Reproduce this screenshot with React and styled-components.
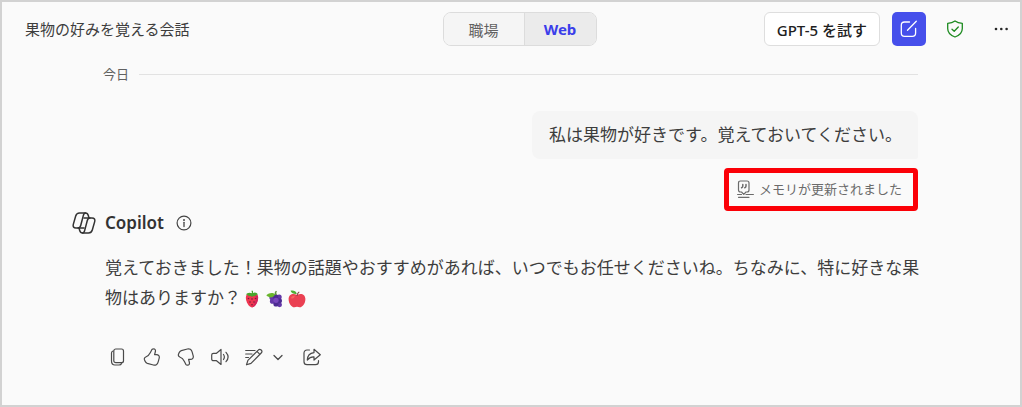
import React, { useState } from "react";
import styled, { createGlobalStyle } from "styled-components";

const App = () => {
  const [scope, setScope] = useState("web");

  return (
    <>
      <GlobalStyle />
      <Frame>
        <Header>
          <Title>果物の好みを覚える会話</Title>
          <Toggle role="group" aria-label="検索範囲">
            <ToggleButton
              type="button"
              $active={scope === "work"}
              aria-pressed={scope === "work"}
              onClick={() => setScope("work")}
            >
              職場
            </ToggleButton>
            <ToggleButton
              type="button"
              $active={scope === "web"}
              aria-pressed={scope === "web"}
              onClick={() => setScope("web")}
            >
              Web
            </ToggleButton>
          </Toggle>
          <HeaderActions>
            <TryButton type="button">GPT-5 を試す</TryButton>
            <HeaderButton type="button" $primary aria-label="新しいチャット">
              <ComposeIcon />
            </HeaderButton>
            <HeaderButton type="button" aria-label="保護されています">
              <ShieldIcon />
            </HeaderButton>
            <HeaderButton type="button" aria-label="その他">
              <MoreIcon />
            </HeaderButton>
          </HeaderActions>
        </Header>
        <Main>
          <UserTurn>
            <DayDivider>今日</DayDivider>
            <Bubble>私は果物が好きです。覚えておいてください。</Bubble>
            <MemoryNotice>
              <MemoryIcon />
              メモリが更新されました
            </MemoryNotice>
          </UserTurn>
          <ReplyHeader>
            <CopilotIcon />
            <ReplyName>Copilot</ReplyName>
            <InfoButton type="button" aria-label="情報">
              <InfoIcon />
            </InfoButton>
          </ReplyHeader>
          <ReplyBody>
            <ReplyText>
              覚えておきました！果物の話題やおすすめがあれば、いつでもお任せくださいね。ちなみに、特に好きな果物はありますか？
              <Fruits>
                <StrawberryIcon />
                <GrapesIcon />
                <AppleIcon />
              </Fruits>
            </ReplyText>
            <Toolbar>
              <ToolButton type="button" aria-label="コピー">
                <CopyIcon />
              </ToolButton>
              <ToolButton type="button" aria-label="いいね">
                <ThumbUpIcon />
              </ToolButton>
              <ToolButton type="button" aria-label="よくない">
                <ThumbDownIcon />
              </ToolButton>
              <ToolButton type="button" aria-label="読み上げ">
                <SpeakerIcon />
              </ToolButton>
              <SplitTools>
                <ToolButton type="button" aria-label="編集">
                  <EditIcon />
                </ToolButton>
                <ToolButton type="button" aria-label="編集オプション">
                  <ChevronIcon />
                </ToolButton>
              </SplitTools>
              <ToolButton type="button" aria-label="共有">
                <ShareIcon />
              </ToolButton>
            </Toolbar>
          </ReplyBody>
        </Main>
      </Frame>
    </>
  );
};

const ComposeIcon = () => (
  <Line width="18" height="18" viewBox="0 0 18 18" $weight={1.3}>
    <path d="M9.5 2H4.5C2.6 2 1.3 3.3 1.3 5.2V13C1.3 15 2.6 16.3 4.5 16.3H12.3C14.3 16.3 15.6 15 15.6 13V8.5" />
    <path d="M7.5 10.3L16.3 1.3" />
  </Line>
);

const ShieldIcon = () => (
  <Line width="18" height="18" viewBox="0 0 18 18" $color="#1c8a1f" $weight={1.3}>
    <path d="M9 1C7 2.5 4.5 3.2 1.7 3.3V8.5C1.7 12.5 4.5 15.4 9 17C13.5 15.4 16.3 12.5 16.3 8.5V3.3C13.5 3.2 11 2.5 9 1Z" />
    <path d="M6 9.2L8.2 11.3L12.3 7" />
  </Line>
);

const MoreIcon = () => (
  <svg width="16" height="16" viewBox="0 0 16 16" fill="#262626" aria-hidden="true">
    <circle cx="3" cy="8" r="1.3" />
    <circle cx="8.3" cy="8" r="1.3" />
    <circle cx="13.6" cy="8" r="1.3" />
  </svg>
);

const MemoryIcon = () => (
  <Line width="17" height="18" viewBox="0 0 17 18" $color="#6b6b6b">
    <path d="M4.5 12H3.5C2.2 12 1.5 11.3 1.5 10V3C1.5 1.7 2.2 1 3.5 1H10C11.3 1 12 1.7 12 3V10C12 11.3 11.3 12 10 12H9L6.8 14.3Z" />
    <path d="M5.8 4.5V6C5.8 7 5.4 7.5 4.6 7.8M9 4.5V6C9 7 8.6 7.5 7.8 7.8" strokeWidth="1.5" />
    <path d="M0.6 14.5H4.5M9 14.5H16.4M1.5 17.3H12" />
  </Line>
);

const ribbonOuter =
  "M12 16H4C1.6 16 0.7 14.5 1.3 12.4L3.7 4C4.3 2 5.7 1 7.5 1H13.5C15.2 1 15.9 2 16.3 3.5L17 6";
const ribbonInner = "M13.5 1C12.3 1 11.7 2 11.3 3.6L8.7 13.5C8.2 15.3 7.2 16 6 16";

const CopilotIcon = () => (
  <Line width="24" height="22" viewBox="0 0 24 22" $color="#333" $weight={1.5}>
    <path d={ribbonOuter} />
    <path d={ribbonInner} />
    <g transform="rotate(180 12 11)">
      <path d={ribbonOuter} />
      <path d={ribbonInner} />
    </g>
  </Line>
);

const InfoIcon = () => (
  <Line width="16" height="16" viewBox="0 0 16 16" $color="#444">
    <circle cx="8" cy="8" r="6.9" />
    <path d="M8 7.3V11.5" strokeWidth="1.3" />
    <circle cx="8" cy="4.9" r="0.4" />
  </Line>
);

const CopyIcon = () => (
  <Line width="18" height="18" viewBox="0 0 18 18">
    <rect x="4.8" y="1" width="9.7" height="13.7" rx="2" />
    <path d="M4 3C2.9 3.3 2.5 4 2.5 5V13C2.5 15.6 3.7 17 6 17H10C11.3 17 12.2 16.5 12.5 15.5" />
  </Line>
);

const thumb =
  "M10.4 0.8C11.9 0.6 12.7 1.9 12.4 3.5L11.6 6.6H13.3C15.6 6.6 16.7 8.3 16.2 10.2L15.1 14.1C14.5 16.4 12.6 17.6 10.4 17L4.3 15.4C3.3 15.1 2.5 14.3 2.1 13.3L1.5 11.8C1 10.4 1.6 9.5 2.8 9C4.9 8.2 6.4 6.7 7.4 4.6L8.8 1.7C9.2 1.1 9.7 0.8 10.4 0.8Z";

const ThumbUpIcon = () => (
  <Line width="18" height="18" viewBox="0 0 18 18">
    <path d={thumb} />
  </Line>
);

const ThumbDownIcon = () => (
  <Line width="18" height="18" viewBox="0 0 18 18">
    <path d={thumb} transform="matrix(1 0 0 -1 0 18)" />
  </Line>
);

const SpeakerIcon = () => (
  <Line width="18" height="18" viewBox="0 0 18 18">
    <path d="M10 1.5V16.5L5.5 12.7H2.5C1.4 12.7 0.7 12 0.7 11V7C0.7 6 1.4 5.3 2.5 5.3H5.5Z" />
    <path d="M12.5 6.5C13.6 8.1 13.6 9.9 12.5 11.5M15 4.3C17.5 7.1 17.5 10.9 15 13.7" />
  </Line>
);

const EditIcon = () => (
  <Line width="18" height="18" viewBox="0 0 18 18">
    <path d="M13.2 2.1C14 1.2 15.3 1.2 16.2 2C17.1 2.9 17.1 4.1 16.2 5L6 15.4L1.5 16.8L2.9 12.4ZM12 3.4L14.9 6.3" />
    <path d="M0.7 2.5H10M0.7 6H7M0.7 9.5H3.5" />
  </Line>
);

const ChevronIcon = () => (
  <Line width="10" height="10" viewBox="0 0 10 10" $weight={1.3}>
    <path d="M1 3.5L5 7.5L9 3.5" />
  </Line>
);

const ShareIcon = () => (
  <Line width="18" height="18" viewBox="0 0 18 18">
    <path d="M6.5 2H4C2.2 2 1 3.2 1 5V13.7C1 15.5 2.2 16.7 4 16.7H12.5C14.3 16.7 15.5 15.5 15.5 13.7V12.5" />
    <path d="M11 1.3L17.3 6.7L11 12V8.8C8.3 8.6 6.3 9.6 4.3 12C4.5 7.8 6.8 5 11 4.6Z" />
  </Line>
);

const StrawberryIcon = () => (
  <svg width="16" height="18" viewBox="0 0 16 18" role="img" aria-label="いちご">
    <path d="M2.3 5.5C0.7 9 3.7 17 8 17.5C12.3 17 15.3 9 13.7 5.5C12.4 3 3.6 3 2.3 5.5Z" fill="#ef3550" />
    <path d="M8 5C12 5 13 8 11.5 11C10.7 13.5 9.5 16 8 17.5C12.3 17 15.3 9 13.7 5.5Z" fill="#d4245d" />
    <path d="M8 3.3L7.5 0.8H9L9 3C11 1.8 13 2.8 14 4.5C12.5 4.6 11.8 5 11.2 6.3C9.8 5.9 9 5.8 8 6.9C7 5.8 6.2 5.9 4.8 6.3C4.2 5 3.5 4.6 2 4.5C3 2.8 5.5 2 8 3.3Z" fill="#48a52c" />
    <g fill="#732039">
      <circle cx="4.5" cy="8.5" r="0.8" />
      <circle cx="8" cy="9" r="0.8" />
      <circle cx="11.5" cy="8.5" r="0.8" />
      <circle cx="6" cy="12" r="0.8" />
      <circle cx="10" cy="12" r="0.8" />
      <circle cx="8" cy="14.7" r="0.8" />
    </g>
  </svg>
);

const GrapesIcon = () => (
  <svg width="16" height="18" viewBox="0 0 16 18" role="img" aria-label="ぶどう">
    <g fill="#6337a8">
      <circle cx="6" cy="7.5" r="2.6" />
      <circle cx="13.2" cy="7" r="2.5" />
      <circle cx="6.5" cy="11.2" r="2.6" />
      <circle cx="13.6" cy="14.8" r="2.4" />
    </g>
    <g fill="#4c2b91">
      <circle cx="9.7" cy="6.8" r="2.6" />
      <circle cx="10" cy="14" r="2.6" />
      <circle cx="13.5" cy="10.8" r="2.5" />
    </g>
    <circle cx="10" cy="10.3" r="2.6" fill="#7846bd" />
    <path d="M9.5 5C8 4 8.5 2 10 0.8L11 1.5C10 2.5 10.3 3.5 11 4.5Z" fill="#60953a" />
    <path d="M9.2 4.4C6.5 2 3.3 2.7 0.3 5.3C3.5 8.4 7 8 9.2 4.4Z" fill="#69b52c" />
  </svg>
);

const AppleIcon = () => (
  <svg width="18" height="18" viewBox="0 0 18 18" role="img" aria-label="りんご">
    <path d="M9 5C5 2.5 0.6 4.5 0.6 9C0.6 13.5 3.5 17.5 6.5 17.3C7.5 17.2 8 16.8 9 16.8C10 16.8 10.5 17.2 11.5 17.3C14.5 17.5 17.4 13.5 17.4 9C17.4 4.5 13 2.5 9 5Z" fill="#ea4052" />
    <path d="M3 8C3.3 6.2 5 5.2 7 5.8C6.5 8 4.5 9.5 3 8Z" fill="#f9605f" />
    <path d="M8.5 6C8.8 3.8 9.5 2.5 11 1.5L11.6 2.2C10.2 3.3 9.7 4.5 9.5 6Z" fill="#8b3d42" />
    <path d="M8.8 3.8C7 4.5 3.6 3.8 2.5 0.8C5.3 0 8 1 8.8 3.8Z" fill="#53ad35" />
  </svg>
);

const GlobalStyle = createGlobalStyle`
  * {
    box-sizing: border-box;
  }
  body {
    margin: 0;
    background-color: #fafafa;
    color: #3d3d3d;
    font-family: "Noto Sans", "Noto Sans CJK JP", sans-serif;
  }
  button {
    font-family: inherit;
    cursor: pointer;
  }
`;
const Line = styled.svg.attrs({ "aria-hidden": true })`
  display: block;
  flex: none;
  fill: none;
  stroke: ${(props) => props.$color || "currentColor"};
  stroke-width: ${(props) => props.$weight || 1.2};
  stroke-linecap: round;
  stroke-linejoin: round;
`;
const Frame = styled.div`
  min-height: 100vh;
  border: 2px solid #d2d2d2;
`;
const Header = styled.header`
  display: grid;
  grid-template-columns: 1fr auto 1fr;
  align-items: center;
  padding: 10px 2px 0 19px;
`;
const Title = styled.h1`
  margin: 0;
  padding-left: 4px;
  font-size: 15px;
  font-weight: 400;
  line-height: 24px;
`;
const Toggle = styled.div`
  display: grid;
  grid-template-columns: 80px 72px;
  height: 34px;
  border: 1px solid #dcdcdc;
  border-radius: 8px;
  overflow: hidden;
`;
const ToggleButton = styled.button`
  padding: 0;
  border: 0;
  background-color: ${(props) => (props.$active ? "#ebebeb" : "#f5f5f5")};
  color: ${(props) => (props.$active ? "#3a3eea" : "#616161")};
  font-size: 15px;
  font-weight: ${(props) => (props.$active ? 700 : 400)};

  & + & {
    border-left: 1px solid #dcdcdc;
  }
`;
const HeaderActions = styled.div`
  display: flex;
  justify-content: flex-end;
  align-items: center;
  gap: 12px;
`;
const TryButton = styled.button`
  height: 34px;
  padding: 0 12px;
  border: 1px solid #dedede;
  border-radius: 6px;
  background-color: #fff;
  color: #202020;
  font-size: 15px;
  font-weight: 500;
  white-space: nowrap;
`;
const HeaderButton = styled.button`
  display: flex;
  justify-content: center;
  align-items: center;
  width: 34px;
  height: 34px;
  padding: 0;
  border: 0;
  border-radius: 5px;
  background-color: ${(props) => (props.$primary ? "#464feb" : "transparent")};
  color: #fff;
`;
const Main = styled.main`
  padding: 16px 94px 24px 70px;
`;
const UserTurn = styled.section`
  display: flex;
  flex-direction: column;
  align-items: flex-end;
  padding: 0 8px 0 31px;
`;
const DayDivider = styled.div`
  display: flex;
  align-items: center;
  gap: 10px;
  width: 100%;
  color: #616161;
  font-size: 13px;
  line-height: 24px;

  &:after {
    content: "";
    flex: 1;
    height: 1px;
    background-color: #e2e2e2;
  }
`;
const Bubble = styled.p`
  margin: 25px 0 9px;
  padding: 9px 16px 9px 17px;
  border-radius: 8px 8px 2px 8px;
  background-color: #f5f5f5;
  font-size: 17px;
  line-height: 30px;
`;
const MemoryNotice = styled.div`
  display: flex;
  align-items: center;
  gap: 5px;
  padding: 4px 11px 5px 8px;
  border: 5px solid #fb0007;
  border-radius: 4px;
  color: #6b6b6b;
  font-size: 13px;
  line-height: 24px;
`;
const ReplyHeader = styled.div`
  display: flex;
  align-items: center;
`;
const ReplyName = styled.h2`
  margin: 0 12px 0 9px;
  color: #333;
  font-size: 17px;
  font-weight: 600;
  line-height: 24px;
`;
const InfoButton = styled.button`
  padding: 0;
  border: 0;
  background: none;
`;
const ReplyBody = styled.div`
  padding-left: 33px;
`;
const ReplyText = styled.p`
  margin: 18px 0 32px;
  font-size: 17px;
  line-height: 30px;
`;
const Fruits = styled.span`
  display: inline-flex;
  gap: 6px;
  margin-left: 3px;
  vertical-align: middle;
`;
const Toolbar = styled.div`
  display: flex;
  align-items: center;
  gap: 10px;
  padding-left: 1px;
`;
const SplitTools = styled.div`
  display: flex;
`;
const ToolButton = styled.button`
  display: flex;
  justify-content: center;
  align-items: center;
  width: 24px;
  height: 24px;
  padding: 0;
  border: 0;
  background: none;
  color: #4a4a4a;
`;

export default App;
